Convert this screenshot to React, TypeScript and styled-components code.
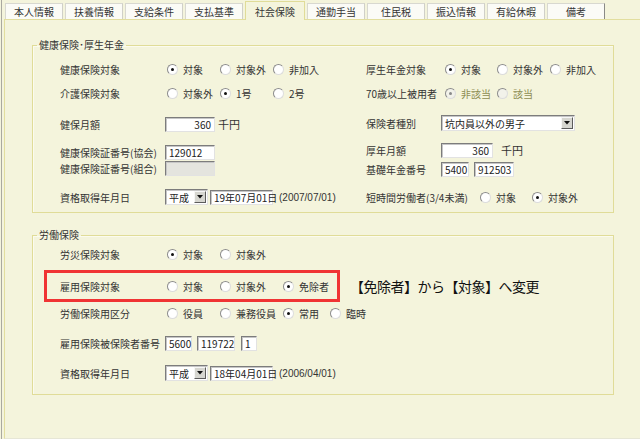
import React from "react";
import styled, { createGlobalStyle } from "styled-components";

const GlobalStyle = createGlobalStyle`
  html, body {
    margin: 0;
    padding: 0;
    background: #f4f4dc;
  }
  body {
    font-family: "Noto Sans CJK JP", "Noto Sans", sans-serif;
    font-size: 10px;
    color: #2a2a2a;
  }
`;

const Root = styled.div`
  width: 639px;
  height: 439px;
  margin-left: 1px;
  border-left: 1px solid #aaa9a0;
  box-sizing: border-box;
  display: flex;
  flex-direction: column;
  overflow: hidden;
`;

const TabStrip = styled.div`
  height: 19px;
  flex-shrink: 0;
  display: flex;
  align-items: flex-end;
  gap: 2px;
  padding-left: 3px;
`;

const Tab = styled.div<{ $active?: boolean; $last?: boolean }>`
  box-sizing: border-box;
  width: ${(p) => (p.$active ? 60 : 58)}px;
  height: ${(p) => (p.$active ? 19 : 16)}px;
  margin-bottom: ${(p) => (p.$active ? -1 : 0)}px;
  position: relative;
  z-index: ${(p) => (p.$active ? 1 : 0)};
  display: flex;
  align-items: center;
  justify-content: center;
  padding-top: ${(p) => (p.$active ? 2 : 1)}px;
  background: ${(p) => (p.$active ? "#f4f4dc" : "#fbfbf6")};
  border: 1px solid ${(p) => (p.$active ? "#e0dc98" : "#d8d8d0")};
  border-bottom: none;
  border-right-color: ${(p) => (p.$last ? "#8a8a86" : p.$active ? "#e0dc98" : "#d0d0c8")};
  color: #333;
  line-height: 1;
  white-space: nowrap;
`;

const Panel = styled.div`
  flex: 1;
  margin-left: 2px;
  border-top: 1px solid #e2de9e;
  border-left: 1px solid #e2de9e;
  border-bottom: 1px solid #e6e6d6;
  overflow: hidden;
`;

const Group = styled.fieldset<{ $mt: number }>`
  margin: ${(p) => p.$mt}px 0 0 27px;
  width: 582px;
  min-width: 0;
  box-sizing: border-box;
  padding: 0;
  border: 1px solid #e0dc98;
  box-shadow: inset 1px 1px 0 #fbfbee;
`;

const Legend = styled.legend`
  margin-left: 4px;
  padding: 0 2px;
  font-size: 10px;
  line-height: 12px;
  color: #333;
`;

const Body = styled.div<{ $pt: number; $pb: number }>`
  padding: ${(p) => p.$pt}px 0 ${(p) => p.$pb}px 27px;
`;

const Columns = styled.div`
  display: grid;
  grid-template-columns: 306px 1fr;
`;

const Column = styled.div`
  display: flex;
  flex-direction: column;
`;

const Row = styled.div<{ $h: number; $mt?: number }>`
  display: flex;
  align-items: center;
  height: ${(p) => p.$h}px;
  margin-top: ${(p) => p.$mt ?? 0}px;
  white-space: nowrap;
`;

const Label = styled.span<{ $w: number }>`
  width: ${(p) => p.$w}px;
  flex-shrink: 0;
  color: #333;
`;

const Radios = styled.div<{ $pl?: number }>`
  display: flex;
  align-items: center;
  padding-left: ${(p) => p.$pl ?? 2}px;
`;

const RadioOpt = styled.label<{ $w?: number; $disabled?: boolean }>`
  display: inline-flex;
  align-items: center;
  gap: 5px;
  width: ${(p) => (p.$w ? `${p.$w}px` : "auto")};
  color: ${(p) => (p.$disabled ? "#8c8c52" : "#333")};
`;

const Dot = styled.span<{ $on?: boolean; $disabled?: boolean }>`
  box-sizing: border-box;
  width: 11px;
  height: 11px;
  flex-shrink: 0;
  border-radius: 50%;
  border: 1px solid;
  border-color: #8c8c8c #dcdcdc #dcdcdc #8c8c8c;
  background: ${(p) => (p.$disabled ? "#f2f2ea" : "#fff")};
  display: inline-flex;
  align-items: center;
  justify-content: center;
  &::after {
    content: "";
    display: ${(p) => (p.$on ? "block" : "none")};
    width: 3px;
    height: 3px;
    border-radius: 50%;
    background: ${(p) => (p.$disabled ? "#8a8a8a" : "#111")};
  }
`;

const Field = styled.div<{ $w: number; $right?: boolean; $disabled?: boolean; $ml?: number }>`
  box-sizing: border-box;
  width: ${(p) => p.$w}px;
  height: 15px;
  margin-left: ${(p) => p.$ml ?? 0}px;
  padding: 0 3px;
  background: ${(p) => (p.$disabled ? "#e4e4de" : "#fff")};
  border: 1px solid;
  border-color: #7c7c7c #e2e2e2 #e2e2e2 #7c7c7c;
  box-shadow: inset 1px 1px 0 #c6c6c6;
  font-size: 10px;
  line-height: 13px;
  text-align: ${(p) => (p.$right ? "right" : "left")};
  color: #222;
`;

const Select = styled.div<{ $w: number }>`
  box-sizing: border-box;
  width: ${(p) => p.$w}px;
  height: 16px;
  display: flex;
  align-items: center;
  justify-content: space-between;
  padding-left: 3px;
  background: #fff;
  border: 1px solid;
  border-color: #7c7c7c #e2e2e2 #e2e2e2 #7c7c7c;
  box-shadow: inset 1px 1px 0 #c6c6c6;
  font-size: 10px;
  color: #222;
`;

const DropBtn = styled.span`
  box-sizing: border-box;
  width: 12px;
  height: 12px;
  margin-right: 1px;
  display: flex;
  align-items: center;
  justify-content: center;
  background: #d6d6d0;
  border: 1px solid;
  border-color: #f6f6f6 #5c5c5c #5c5c5c #f6f6f6;
`;

const Unit = styled.span<{ $ml: number }>`
  margin-left: ${(p) => p.$ml}px;
  font-size: 11px;
  color: #333;
`;

const Note = styled.span`
  margin-left: 6px;
  font-family: "Liberation Sans", "Noto Sans CJK JP", sans-serif;
  font-size: 10px;
  color: #333;
`;

const Highlight = styled.div`
  box-sizing: border-box;
  width: 296px;
  height: 32px;
  margin-left: -16px;
  padding-left: 13px;
  display: flex;
  align-items: center;
  border: 3px solid #f03434;
`;

const Annotation = styled.span`
  margin-left: 10px;
  font-size: 14px;
  letter-spacing: -0.5px;
  color: #111;
`;

type Opt = { text: string; on?: boolean; w?: number; disabled?: boolean };

const RadioGroup = ({ opts, pl }: { opts: Opt[]; pl?: number }) => (
  <Radios $pl={pl}>
    {opts.map((o) => (
      <RadioOpt key={o.text} $w={o.w} $disabled={o.disabled}>
        <Dot $on={o.on} $disabled={o.disabled} />
        {o.text}
      </RadioOpt>
    ))}
  </Radios>
);

const Arrow = () => (
  <svg width="6" height="4" viewBox="0 0 6 4">
    <path d="M0 0h6L3 3.5z" fill="#111" />
  </svg>
);

const DropDown = ({ w, value }: { w: number; value: string }) => (
  <Select $w={w}>
    <span>{value}</span>
    <DropBtn>
      <Arrow />
    </DropBtn>
  </Select>
);

const EraDate = ({ date, iso }: { date: string; iso: string }) => (
  <>
    <DropDown w={43} value="平成" />
    <Field $w={63} $ml={2}>
      {date}
    </Field>
    <Note>{iso}</Note>
  </>
);

const tabs = ["本人情報", "扶養情報", "支給条件", "支払基準", "社会保険", "通勤手当", "住民税", "振込情報", "有給休暇", "備考"];

export default function App() {
  return (
    <>
      <GlobalStyle />
      <Root>
        <TabStrip>
          {tabs.map((t, i) => (
            <Tab key={t} $active={t === "社会保険"} $last={i === tabs.length - 1}>
              {t}
            </Tab>
          ))}
        </TabStrip>
        <Panel>
          <Group $mt={19}>
            <Legend>健康保険･厚生年金</Legend>
            <Body $pt={6} $pb={3}>
              <Columns>
                <Column>
                  <Row $h={24}>
                    <Label $w={105}>健康保険対象</Label>
                    <RadioGroup
                      opts={[
                        { text: "対象", on: true, w: 53 },
                        { text: "対象外", w: 53 },
                        { text: "非加入" },
                      ]}
                    />
                  </Row>
                  <Row $h={24}>
                    <Label $w={105}>介護保険対象</Label>
                    <RadioGroup
                      opts={[
                        { text: "対象外", w: 53 },
                        { text: "1号", on: true, w: 53 },
                        { text: "2号" },
                      ]}
                    />
                  </Row>
                  <Row $h={24} $mt={7}>
                    <Label $w={105}>健保月額</Label>
                    <Field $w={50} $right>
                      360
                    </Field>
                    <Unit $ml={3}>千円</Unit>
                  </Row>
                  <Row $h={16} $mt={8}>
                    <Label $w={105}>健康保険証番号(協会)</Label>
                    <Field $w={50}>129012</Field>
                  </Row>
                  <Row $h={16}>
                    <Label $w={105}>健康保険証番号(組合)</Label>
                    <Field $w={50} $disabled />
                  </Row>
                  <Row $h={24} $mt={9}>
                    <Label $w={105}>資格取得年月日</Label>
                    <EraDate date="19年07月01日" iso="(2007/07/01)" />
                  </Row>
                </Column>
                <Column>
                  <Row $h={24}>
                    <Label $w={75}>厚生年金対象</Label>
                    <RadioGroup
                      pl={4}
                      opts={[
                        { text: "対象", on: true, w: 52 },
                        { text: "対象外", w: 53 },
                        { text: "非加入" },
                      ]}
                    />
                  </Row>
                  <Row $h={24}>
                    <Label $w={75}>70歳以上被用者</Label>
                    <RadioGroup
                      pl={4}
                      opts={[
                        { text: "非該当", on: true, w: 52, disabled: true },
                        { text: "該当", disabled: true },
                      ]}
                    />
                  </Row>
                  <Row $h={24} $mt={6}>
                    <Label $w={75}>保険者種別</Label>
                    <DropDown w={134} value="坑内員以外の男子" />
                  </Row>
                  <Row $h={16} $mt={7}>
                    <Label $w={75}>厚年月額</Label>
                    <Field $w={52} $right>
                      360
                    </Field>
                    <Unit $ml={8}>千円</Unit>
                  </Row>
                  <Row $h={18} $mt={2}>
                    <Label $w={75}>基礎年金番号</Label>
                    <Field $w={28}>5400</Field>
                    <Field $w={40} $ml={5}>
                      912503
                    </Field>
                  </Row>
                  <Row $h={24} $mt={7}>
                    <Label $w={114}>短時間労働者(3/4未満)</Label>
                    <RadioGroup
                      pl={0}
                      opts={[
                        { text: "対象", w: 52 },
                        { text: "対象外", on: true },
                      ]}
                    />
                  </Row>
                </Column>
              </Columns>
            </Body>
          </Group>

          <Group $mt={16}>
            <Legend>労働保険</Legend>
            <Body $pt={1} $pb={9}>
              <Row $h={24}>
                <Label $w={105}>労災保険対象</Label>
                <RadioGroup
                  opts={[
                    { text: "対象", on: true, w: 53 },
                    { text: "対象外" },
                  ]}
                />
              </Row>
              <Row $h={32} $mt={4}>
                <Highlight>
                  <Label $w={105}>雇用保険対象</Label>
                  <RadioGroup
                    opts={[
                      { text: "対象", w: 53 },
                      { text: "対象外", w: 63 },
                      { text: "免除者", on: true },
                    ]}
                  />
                </Highlight>
                <Annotation>【免除者】から【対象】へ変更</Annotation>
              </Row>
              <Row $h={20} $mt={1}>
                <Label $w={105}>労働保険用区分</Label>
                <RadioGroup
                  opts={[
                    { text: "役員", w: 53 },
                    { text: "兼務役員", w: 63 },
                    { text: "常用", on: true, w: 47 },
                    { text: "臨時" },
                  ]}
                />
              </Row>
              <Row $h={24} $mt={8}>
                <Label $w={105}>雇用保険被保険者番号</Label>
                <Field $w={27}>5600</Field>
                <Field $w={38} $ml={5}>
                  119722
                </Field>
                <Field $w={16} $ml={6}>
                  1
                </Field>
              </Row>
              <Row $h={24} $mt={6}>
                <Label $w={105}>資格取得年月日</Label>
                <EraDate date="18年04月01日" iso="(2006/04/01)" />
              </Row>
            </Body>
          </Group>
        </Panel>
      </Root>
    </>
  );
}
